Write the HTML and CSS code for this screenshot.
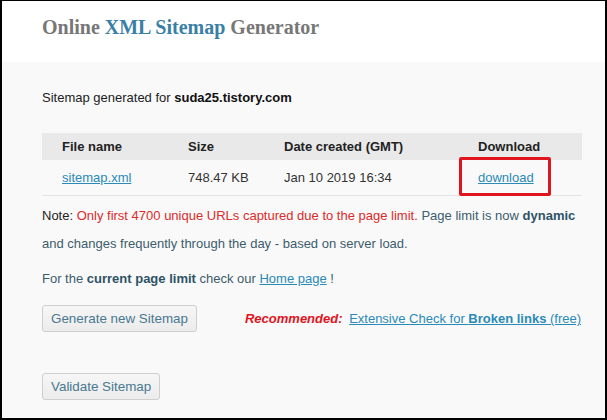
FILE: index.html
```html
<!DOCTYPE html>
<html>
<head>
<meta charset="utf-8">
<link rel="stylesheet" href="styles.css">
</head>
<body>
<div class="frame">
  <header class="header">
    <h1 class="title">Online <span class="blue">XML Sitemap</span> Generator</h1>
  </header>
  <main class="content">
    <p class="gen">Sitemap generated for <b>suda25.tistory.com</b></p>
    <table class="tbl">
      <thead>
        <tr><th class="c1">File name</th><th class="c2">Size</th><th class="c3">Date created (GMT)</th><th class="c4">Download</th></tr>
      </thead>
      <tbody>
        <tr><td class="c1"><a href="#">sitemap.xml</a></td><td class="c2">748.47 KB</td><td class="c3">Jan 10 2019 16:34</td><td class="c4"><span class="hl"><a href="#">download</a></span></td></tr>
      </tbody>
    </table>
    <p class="note"><span class="dark">Note:</span> <span class="red">Only first 4700 unique URLs captured due to the page limit.</span> Page limit is now <b>dynamic</b> and changes frequently through the day - based on server load.</p>
    <p class="limit">For the <b>current page limit</b> check our <a href="#">Home page</a> !</p>
    <div class="actions">
      <button class="btn">Generate new Sitemap</button>
      <div class="rec"><span class="rec-label">Recommended:</span> <a href="#">Extensive Check for <b>Broken links </b>(free)</a></div>
    </div>
    <div class="actions2">
      <button class="btn">Validate Sitemap</button>
    </div>
  </main>
</div>
</body>
</html>
```
FILE: styles.css
```css
html, body { margin: 0; padding: 0; }
body { font-family: "Liberation Sans", Arial, sans-serif; background: #f9f9f9; }
.frame {
  width: 607px; height: 420px; box-sizing: border-box;
  border-left: 2px solid #000; border-right: 2px solid #000;
  border-top: 1px solid #000; border-bottom: 2px solid #000;
  background: #f9f9f9; overflow: hidden;
}
.header { background: #fff; height: 61px; box-sizing: border-box; padding: 15px 0 0 40px; }
.title {
  margin: 0; font-family: "Liberation Serif", "Times New Roman", serif; font-weight: bold;
  font-size: 20px; color: #777; letter-spacing: 0;
}
.blue { color: #3a7fa6; }
.content { padding: 28px 23px 0 40px; color: #333; font-size: 13px; }
.gen { margin: 0 0 27px; color: #222; line-height: 16px; }
.gen b { color: #111; }
.tbl { width: 540px; border-collapse: collapse; }
.tbl th { background: #e9e9e9; text-align: left; font-weight: bold; color: #222; height: 27px; padding: 0; font-size: 13px; }
.tbl td { height: 35px; padding: 0; border-bottom: 1px solid #e3e3e3; color: #333; }
.c1 { padding-left: 20px !important; width: 126px; }
.c2 { width: 96px; }
.c3 { width: 194px; }
.tbl a { color: #2a8ab8; }
.hl { display: inline-block; position: relative; }
.hl::before {
  content: ""; position: absolute; left: -19px; top: -13px; right: -17px; bottom: -11px;
  border: 3px solid #e0141e; border-radius: 2px;
}
.note { margin: 6px 0 0; line-height: 28px; color: #3d5c6c; }
.note b, .limit b { color: #2e5366; }
.dark { color: #222; }
.red { color: #dd2a2a; }
.limit { margin: 7px 0 0; line-height: 28px; color: #3d5c6c; }
.limit a { color: #2a8ab8; }
.actions { display: flex; align-items: center; margin-top: 12px; white-space: nowrap; }
.btn {
  font-family: "Liberation Sans", Arial, sans-serif; font-size: 13.4px; color: #4a7890;
  background: linear-gradient(#f6f6f6, #ececec); border: 1px solid #cfcfcf; border-radius: 3px;
  height: 27px; padding: 0 8px; cursor: pointer; white-space: nowrap; flex: none;
}
.rec { margin-left: 48px; font-size: 13px; white-space: nowrap; }
.rec-label { color: #e0141e; font-weight: bold; font-style: italic; margin-right: 3px; }
.rec a { color: #2a8ab8; }
.actions2 { margin-top: 41px; }
```
